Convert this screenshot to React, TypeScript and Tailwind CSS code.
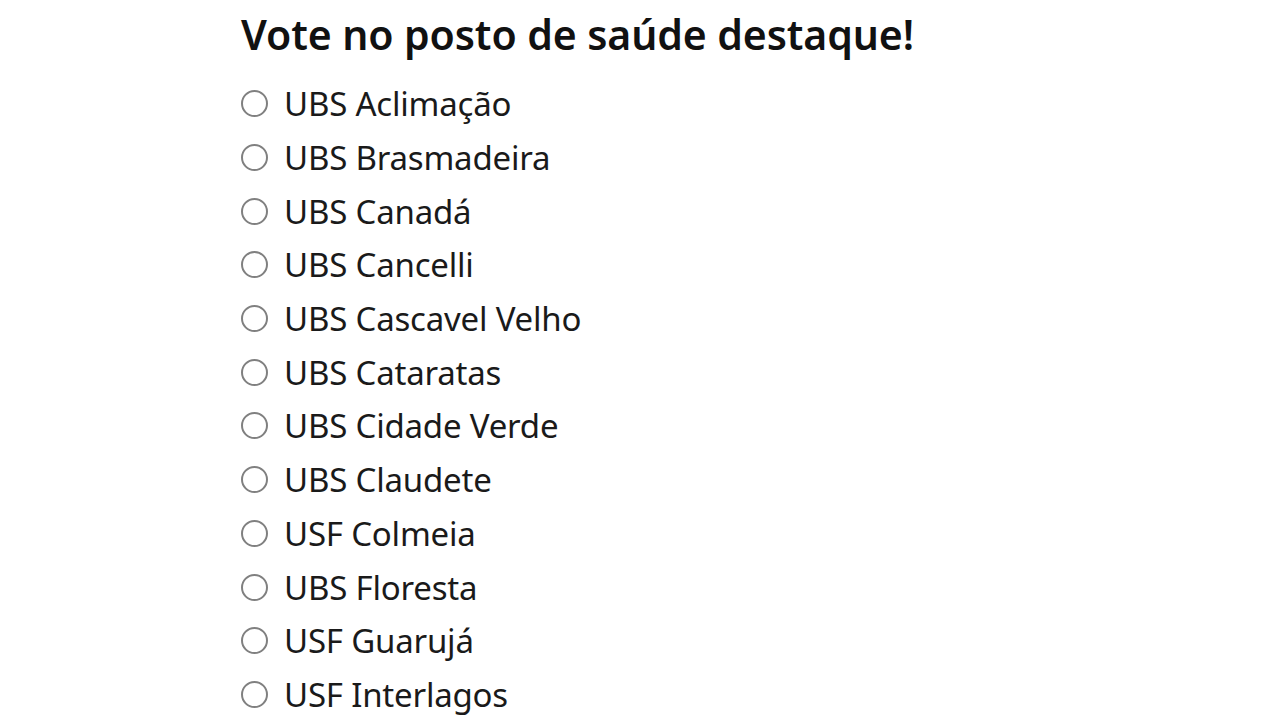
import React from "react";

const items = [
  "UBS Aclimação",
  "UBS Brasmadeira",
  "UBS Canadá",
  "UBS Cancelli",
  "UBS Cascavel Velho",
  "UBS Cataratas",
  "UBS Cidade Verde",
  "UBS Claudete",
  "USF Colmeia",
  "UBS Floresta",
  "USF Guarujá",
  "USF Interlagos",
];

export default function App() {
  return (
    <div className="h-[720px] w-[1280px] overflow-hidden bg-white pl-[241px] font-['Noto_Sans',sans-serif] text-[#111]">
      <h1 className="pt-[5px] text-[41px] font-semibold leading-[58px] tracking-[-0.1px]">
        Vote no posto de saúde destaque!
      </h1>
      <div className="mt-[14px] flex flex-col">
        {items.map((it) => (
          <label key={it} className="flex h-[53.7px] items-center">
            <span className="mr-[16px] h-[27px] w-[27px] shrink-0 rounded-full border-2 border-[#808080] bg-white" />
            <span className="text-[33px] leading-none tracking-[-0.2px] text-[#1a1a1a]">{it}</span>
          </label>
        ))}
      </div>
    </div>
  );
}
